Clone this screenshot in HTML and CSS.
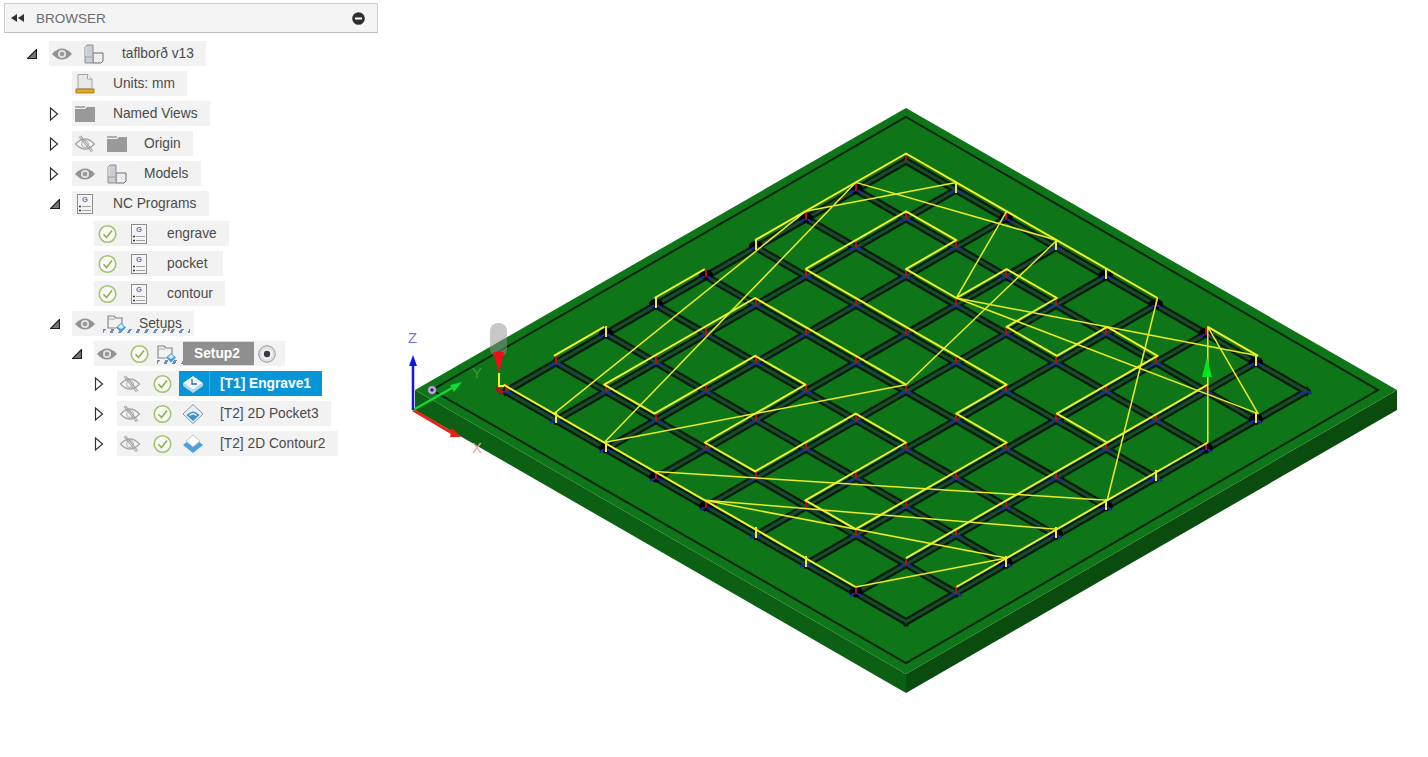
FILE: index.html
```html
<!DOCTYPE html>
<html lang="en">
<head>
<meta charset="utf-8">
<title>Browser</title>
<link rel="stylesheet" href="styles.css">
</head>
<body>
<svg class="sprites" aria-hidden="true">
  <symbol id="eye" viewBox="0 0 22 22"><path d="M1 11Q11 0 21 11Q11 22 1 11Z" fill="#939393"/><circle cx="11" cy="11" r="4" fill="#e6e6e6"/><circle cx="11" cy="11" r="2.3" fill="#999"/></symbol>
  <symbol id="eyeoff" viewBox="0 0 22 22"><path d="M1.5 11Q11 1 20.500 11Q11 21 1.500 11Z" fill="none" stroke="#a8a8a8" stroke-width="1.300"/><circle cx="11" cy="11" r="3.500" fill="none" stroke="#b0b0b0"/><path d="M5 3.500L17.500 19M6.500 2.800L19 18" stroke="#a0a0a0" stroke-width="1.100" fill="none"/></symbol>
  <symbol id="check" viewBox="0 0 22 22"><circle cx="11.500" cy="11" r="8.300" fill="#f9f9f9" stroke="#a2c36a" stroke-width="1.600"/><path d="M7.500 11.300L10.500 14.500L16 7.500" fill="none" stroke="#8fb050" stroke-width="1.600"/></symbol>
  <symbol id="comp" viewBox="0 0 22 22"><path d="M10 10H20V18L18 20H10Z" fill="#eceef0" stroke="#6c6c6c"/><path d="M2 4L4 2H10V20H2Z" fill="#c9ced4" stroke="#8e8e8e"/><path d="M2.500 14H9.500" stroke="#9ea4ab"/><path d="M3 3.500V13" stroke="#e6e9ec"/></symbol>
  <symbol id="units" viewBox="0 0 22 22"><path d="M4 1.500H13.500L18 6V16H4Z" fill="#e8e8e8" stroke="#a4a4a4"/><path d="M13.500 1.500V6H18" fill="#fafafa" stroke="#a4a4a4"/><rect x="2" y="16" width="18" height="4" fill="#e5a81f" stroke="#8f6212" stroke-width=".7"/></symbol>
  <symbol id="folder" viewBox="0 0 22 22"><path d="M1 3H11V5H1Z" fill="#adadad"/><path d="M1 6H11L13 4H21V19H1Z" fill="#999"/></symbol>
  <symbol id="nc" viewBox="0 0 22 22"><rect x="3.500" y="1.500" width="15" height="19" fill="#f5f5f5" stroke="#8c8c8c"/><path d="M5 13.500H7M5 17.500H7" stroke="#333" stroke-width="1.600"/><path d="M8 13.500H17M8 17.500H17" stroke="#a0a0a0"/></symbol>
  <symbol id="setup" viewBox="0 0 22 22"><path d="M10 15H2V3H8L10 5H16V11" fill="none" stroke="#808080" stroke-width="1.100"/><path d="M2 6H9" stroke="#a8a8a8"/><path d="M15 10L20 14.500L15 19.500L10 14.500Z" fill="#3f9fe0"/><path d="M15 11L18 14L15 16L12 14Z" fill="#d9eefb"/></symbol>
  <symbol id="radio" viewBox="0 0 22 22"><circle cx="11" cy="11" r="8.300" fill="#dedede" stroke="#9a9a9a"/><circle cx="11" cy="11" r="5.500" fill="#f4f4f4"/><circle cx="11" cy="11" r="3.200" fill="#3a3a46"/></symbol>
  <symbol id="engrave" viewBox="0 0 22 22"><path d="M1 10V13L11 20L21 13V10L11 17Z" fill="#bdd3e3"/><path d="M11 3L21 10L11 17L1 10Z" fill="#f3f6f8"/><path d="M10 6V11H15" fill="none" stroke="#1f6fb5" stroke-width="1.300"/></symbol>
  <symbol id="pocket" viewBox="0 0 22 22"><path d="M11 1.500L21 11L11 20.500L1 11Z" fill="#eaeff3" stroke="#7f97ad"/><path d="M4.500 12Q11 5 17.500 12L11 18Z" fill="#3f90d0"/><path d="M7.500 12.500Q11 9 14.500 12.500" fill="none" stroke="#e6f2fa" stroke-width="1.200"/></symbol>
  <symbol id="contour" viewBox="0 0 22 22"><path d="M1 12L11 4L21 12L11 20Z" fill="#4da0dd"/><path d="M4 8L11 2L18 8L11 14Z" fill="#fff" stroke="#a9bccb" stroke-width=".8"/></symbol>
  <symbol id="open" viewBox="0 0 10 10"><path d="M.5 9.500H9.500V.5Z" fill="#777" stroke="#1c1c1c" stroke-width="1.200"/></symbol>
  <symbol id="closed" viewBox="0 0 10 14"><path d="M1.500 1L8.500 7L1.500 13Z" fill="#fff" stroke="#333" stroke-width="1.200"/></symbol>
</svg>

<div class="app">
  <aside class="browser">
    <header class="browser-head">
      <svg class="collapse" viewBox="0 0 13 8"><path d="M0 4L6 0V8ZM7 4L13 0V8Z"/></svg>
      <span class="browser-title">BROWSER</span>
      <svg class="pin" viewBox="0 0 13 13"><circle cx="6.500" cy="6.500" r="6.300"/><rect x="3" y="5.500" width="7" height="2"/></svg>
    </header>
    <div class="tree">
      <div class="row lvl0"><span class="tri"><svg class="tri-open"><use href="#open"/></svg></span><div class="chip"><span class="slot"><svg class="ico"><use href="#eye"/></svg></span><span class="slot"><svg class="ico"><use href="#comp"/></svg></span><span class="label">taflborð v13</span></div></div>
      <div class="row lvl1"><span class="tri"></span><div class="chip"><span class="slot"><svg class="ico"><use href="#units"/></svg></span><span class="label">Units: mm</span></div></div>
      <div class="row lvl1"><span class="tri"><svg class="tri-closed"><use href="#closed"/></svg></span><div class="chip"><span class="slot"><svg class="ico"><use href="#folder"/></svg></span><span class="label">Named Views</span></div></div>
      <div class="row lvl1"><span class="tri"><svg class="tri-closed"><use href="#closed"/></svg></span><div class="chip"><span class="slot"><svg class="ico"><use href="#eyeoff"/></svg></span><span class="slot"><svg class="ico"><use href="#folder"/></svg></span><span class="label label-op">Origin</span></div></div>
      <div class="row lvl1"><span class="tri"><svg class="tri-closed"><use href="#closed"/></svg></span><div class="chip"><span class="slot"><svg class="ico"><use href="#eye"/></svg></span><span class="slot"><svg class="ico"><use href="#comp"/></svg></span><span class="label label-op">Models</span></div></div>
      <div class="row lvl1"><span class="tri"><svg class="tri-open"><use href="#open"/></svg></span><div class="chip"><span class="slot slot-nc"><svg class="ico"><use href="#nc"/></svg><span class="g-mark">G</span></span><span class="label">NC Programs</span></div></div>
      <div class="row lvl2"><span class="tri"></span><div class="chip"><span class="slot"><svg class="ico"><use href="#check"/></svg></span><span class="slot slot-nc"><svg class="ico"><use href="#nc"/></svg><span class="g-mark">G</span></span><span class="label">engrave</span></div></div>
      <div class="row lvl2"><span class="tri"></span><div class="chip"><span class="slot"><svg class="ico"><use href="#check"/></svg></span><span class="slot slot-nc"><svg class="ico"><use href="#nc"/></svg><span class="g-mark">G</span></span><span class="label label-wide">pocket</span></div></div>
      <div class="row lvl2"><span class="tri"></span><div class="chip"><span class="slot"><svg class="ico"><use href="#check"/></svg></span><span class="slot slot-nc"><svg class="ico"><use href="#nc"/></svg><span class="g-mark">G</span></span><span class="label">contour</span></div></div>
      <div class="row lvl1"><span class="tri"><svg class="tri-open"><use href="#open"/></svg></span><div class="chip"><span class="slot"><svg class="ico"><use href="#eye"/></svg></span><span class="slot"><svg class="ico"><use href="#setup"/></svg></span><span class="label label-tight">Setups</span><span class="hatch hatch-setups"></span></div></div>
      <div class="row lvl2"><span class="tri"><svg class="tri-open"><use href="#open"/></svg></span><div class="chip chip-setup"><span class="slot"><svg class="ico"><use href="#eye"/></svg></span><span class="slot"><svg class="ico"><use href="#check"/></svg></span><span class="slot slot-setup"><svg class="ico"><use href="#setup"/></svg></span><span class="active-setup">Setup2</span><span class="slot slot-radio"><svg class="ico"><use href="#radio"/></svg></span><span class="hatch hatch-setup2"></span></div></div>
      <div class="row lvl3"><span class="tri"><svg class="tri-closed"><use href="#closed"/></svg></span><div class="chip"><span class="slot"><svg class="ico"><use href="#eyeoff"/></svg></span><span class="slot"><svg class="ico"><use href="#check"/></svg></span><div class="selected"><span class="selected-icon"><svg class="ico"><use href="#engrave"/></svg></span><span class="selected-label">[T1] Engrave1</span></div></div></div>
      <div class="row lvl3"><span class="tri"><svg class="tri-closed"><use href="#closed"/></svg></span><div class="chip"><span class="slot"><svg class="ico"><use href="#eyeoff"/></svg></span><span class="slot"><svg class="ico"><use href="#check"/></svg></span><span class="slot slot-op"><svg class="ico"><use href="#pocket"/></svg></span><span class="label label-op">[T2] 2D Pocket3</span></div></div>
      <div class="row lvl3"><span class="tri"><svg class="tri-closed"><use href="#closed"/></svg></span><div class="chip"><span class="slot"><svg class="ico"><use href="#eyeoff"/></svg></span><span class="slot"><svg class="ico"><use href="#check"/></svg></span><span class="slot slot-op"><svg class="ico"><use href="#contour"/></svg></span><span class="label label-op">[T2] 2D Contour2</span></div></div>
    </div>
  </aside>

  <svg class="viewport" viewBox="378 0 1050 757" role="img" aria-label="Engraving toolpath on a game board">
    <defs>
      <g id="red"><path d="M0-7V1" stroke="#b01212" stroke-width="2"/></g>
      <g id="b"><path d="M-6 3L-1.500 .5M1.500 .5L6 3" stroke="#1a2ca8" stroke-width="2.200" fill="none"/></g>
      <g id="n"><use href="#b"/><use href="#red"/></g>
      <g id="tb"><use href="#b"/><path d="M0-8V3" stroke="#eeee20" stroke-width="2"/></g>
      <ellipse id="blob" cx="0" cy="-1" rx="7" ry="5" fill="#020402"/>
      <g id="nk"><use href="#blob"/><use href="#n"/></g>
      <g id="tk"><use href="#blob"/><use href="#tb"/></g>
    </defs>

    <polygon class="side-left" points="415,390 906,674 906,693 415,410"/>
    <polygon class="side-right" points="1397,390 906,674 906,693 1397,410"/>
    <polygon class="top-face" points="906,108 1397,390 906,674 415,390"/>
    <polygon class="outer-groove" points="906,117 1378,390 906,663 432,390"/>

    <g transform="matrix(50 28.8 -50 28.8 906 161)">
      <path class="trench" d="M0 0H8M0 1H8M0 2H8M0 3H8M0 4H8M0 5H8M0 6H8M0 7H8M0 8H8M0 0V8M1 0V8M2 0V8M3 0V8M4 0V8M5 0V8M6 0V8M7 0V8M8 0V8"/>
      <path class="trench-core" d="M0 0H8M0 1H8M0 2H8M0 3H8M0 4H8M0 5H8M0 6H8M0 7H8M0 8H8M0 0V8M1 0V8M2 0V8M3 0V8M4 0V8M5 0V8M6 0V8M7 0V8M8 0V8"/>
    </g>

    <g>
      <use href="#red" x="906" y="161"/>
      <use href="#nk" x="856" y="190"/><use href="#tb" x="956" y="190"/>
      <use href="#nk" x="806" y="219"/><use href="#n" x="906" y="219"/><use href="#nk" x="1006" y="219"/>
      <use href="#tk" x="756" y="247"/><use href="#n" x="856" y="247"/><use href="#n" x="956" y="247"/><use href="#tb" x="1056" y="247"/>
      <use href="#nk" x="706" y="276"/><use href="#n" x="806" y="276"/><use href="#n" x="906" y="276"/><use href="#n" x="1006" y="276"/><use href="#tk" x="1106" y="276"/>
      <use href="#tk" x="656" y="305"/><use href="#n" x="756" y="305"/><use href="#n" x="856" y="305"/><use href="#n" x="956" y="305"/><use href="#n" x="1056" y="305"/><use href="#nk" x="1156" y="305"/>
      <use href="#tk" x="606" y="334"/><use href="#n" x="706" y="334"/><use href="#n" x="806" y="334"/><use href="#n" x="906" y="334"/><use href="#n" x="1006" y="334"/><use href="#n" x="1106" y="334"/><use href="#nk" x="1206" y="334"/>
      <use href="#n" x="556" y="363"/><use href="#n" x="656" y="363"/><use href="#n" x="756" y="363"/><use href="#n" x="856" y="363"/><use href="#n" x="956" y="363"/><use href="#n" x="1056" y="363"/><use href="#n" x="1156" y="363"/><use href="#tk" x="1256" y="363"/>
      <use href="#n" x="506" y="391"/><use href="#n" x="606" y="391"/><use href="#n" x="706" y="391"/><use href="#n" x="806" y="391"/><use href="#n" x="906" y="391"/><use href="#n" x="1006" y="391"/><use href="#n" x="1106" y="391"/><use href="#n" x="1206" y="391"/><use href="#b" x="1306" y="391"/>
      <use href="#tb" x="556" y="420"/><use href="#n" x="656" y="420"/><use href="#n" x="756" y="420"/><use href="#n" x="856" y="420"/><use href="#n" x="956" y="420"/><use href="#n" x="1056" y="420"/><use href="#n" x="1156" y="420"/><use href="#tk" x="1256" y="420"/>
      <use href="#tk" x="606" y="449"/><use href="#n" x="706" y="449"/><use href="#n" x="806" y="449"/><use href="#n" x="906" y="449"/><use href="#n" x="1006" y="449"/><use href="#n" x="1106" y="449"/><use href="#nk" x="1206" y="449"/>
      <use href="#nk" x="656" y="478"/><use href="#n" x="756" y="478"/><use href="#n" x="856" y="478"/><use href="#n" x="956" y="478"/><use href="#n" x="1056" y="478"/><use href="#tb" x="1156" y="478"/>
      <use href="#nk" x="706" y="507"/><use href="#n" x="806" y="507"/><use href="#n" x="906" y="507"/><use href="#n" x="1006" y="507"/><use href="#tk" x="1106" y="507"/>
      <use href="#tb" x="756" y="535"/><use href="#n" x="856" y="535"/><use href="#n" x="956" y="535"/><use href="#tk" x="1056" y="535"/>
      <use href="#tb" x="806" y="564"/><use href="#n" x="906" y="564"/><use href="#tk" x="1006" y="564"/>
      <use href="#nk" x="856" y="593"/><use href="#n" x="956" y="593"/>
    </g>

    <g transform="matrix(50.3 28.9 -50.3 28.9 906 153.500)">
      <path class="rapid" d="M0 1L3 0M0 2L1 0M1 8L0 2M2 8L0 1M2 8L4 4L3 0M3 2L2 0M3 2L7 0M3 2L8 1L6 0L8 2M5 0L8 4L3 8M4 8L8 5M4 8L8 6L7 8"/>
      <path class="feed" d="M0 3L0 0L5 0M6 0L7 0M0 4L0 5M0 6L0 7M0 8L7 8M8 7L8 2M1 3L1 1L2 1L2 2L3 2L3 1L4 1L4 2L5 2L5 1L6 1L6 3L7 3M7 1L7 7M1 3L5 3L5 4L6 4L6 7L5 7L5 5L4 5L4 7L3 7L3 5L2 5L2 7L1 7L1 4L4 4"/>
    </g>

    <path class="lead" d="M499 373V386H504"/>
    <path class="lead-mark" d="M496 388L503 393"/>
    <path class="arrow-green" d="M1207 357L1212 377H1202Z"/>

    <rect class="tool-shank" x="490" y="323" width="17" height="34" rx="8"/>
    <path class="tool-tip" d="M493 352H504L499 373Z"/>

    <path class="axis-x" d="M413 410L452 433"/>
    <path class="head-x" d="M461 437L450 437L452 428Z"/>
    <path class="axis-y" d="M413 410L452 388"/>
    <path class="head-y" d="M462 382L450 385L454 392Z"/>
    <path class="axis-z" d="M413 410V364"/>
    <path class="head-z" d="M413 355L417 366H409Z"/>
    <circle class="origin-ring" cx="432" cy="390" r="4.500"/>
    <circle class="origin-dot" cx="432" cy="390" r="1.800"/>
    <text class="label-z" x="408" y="343">Z</text>
    <text class="label-y" x="472" y="378">Y</text>
    <text class="label-x" x="472" y="453">X</text>
  </svg>
</div>
</body>
</html>
```
FILE: styles.css
```css
html, body {
  margin: 0;
  padding: 0;
  height: 100%;
  background: #fff;
  overflow: hidden;
  font-family: "Liberation Sans", Arial, sans-serif;
}

.sprites {
  position: absolute;
  width: 0;
  height: 0;
}

.app {
  display: flex;
  height: 757px;
}

.browser {
  width: 374px;
  margin: 3px 0 0 4px;
  flex: none;
}

.browser-head {
  display: flex;
  align-items: center;
  height: 28px;
  padding: 0 12px 0 6px;
  background: #f4f4f4;
  border: 1px solid #cfcfcf;
  border-bottom-color: #bdbdbd;
}

.collapse {
  width: 13px;
  height: 8px;
  fill: #333;
}

.browser-title {
  margin-left: 12px;
  font-size: 13.5px;
  color: #6a6a6a;
  flex: 1;
}

.pin {
  width: 13px;
  height: 13px;
  fill: #2e2e2e;
}

.pin rect {
  fill: #fff;
}

.tree {
  display: flex;
  flex-direction: column;
  gap: 5px;
  margin-top: 8px;
}

.row {
  display: flex;
  align-items: center;
  height: 25px;
}

.lvl0 { padding-left: 23px; }
.lvl1 { padding-left: 46px; }
.lvl2 { padding-left: 68px; }
.lvl3 { padding-left: 91px; }

.tri {
  display: flex;
  align-items: center;
  flex: none;
  width: 22px;
}

.tri-open {
  width: 10px;
  height: 10px;
}

.tri-closed {
  width: 10px;
  height: 14px;
  margin-left: -1px;
}

.chip {
  position: relative;
  display: flex;
  align-items: center;
  gap: 6px;
  height: 25px;
  background: #f2f2f2;
}

.chip-setup {
  padding-right: 5px;
}

.slot {
  display: flex;
  align-items: center;
  justify-content: center;
  flex: none;
  width: 26px;
  height: 25px;
}

.slot-nc {
  position: relative;
}

.g-mark {
  position: absolute;
  left: 0;
  right: 0;
  top: 5px;
  font-size: 7.5px;
  font-weight: bold;
  line-height: 8px;
  text-align: center;
  color: #2b86d2;
}

.ico {
  display: block;
  width: 22px;
  height: 22px;
}

.label {
  margin-left: 9px;
  padding-right: 12.5px;
  font-size: 13.75px;
  line-height: 25px;
  color: #4a4a4a;
  white-space: nowrap;
}

.label-tight {
  margin-left: 3px;
}

.label-op {
  margin-left: 8px;
}

.label-wide {
  padding-right: 15px;
}

.slot-op {
  margin-left: -1px;
}

.slot-setup {
  margin-left: -4px;
}

.slot-radio {
  margin-left: -6px;
}

.active-setup {
  box-sizing: border-box;
  width: 71px;
  height: 25px;
  margin-left: -3px;
  padding-left: 11px;
  font-size: 13.75px;
  font-weight: bold;
  line-height: 23px;
  color: #fff;
  background: #8f8f8f;
  border-top: 1px solid #dcdcdc;
  border-bottom: 1px solid #dcdcdc;
}

.selected {
  display: flex;
  align-items: center;
  height: 25px;
  margin-left: -2px;
  background: #0696d7;
}

.selected-icon {
  display: flex;
  align-items: center;
  box-sizing: border-box;
  width: 31px;
  height: 25px;
  padding-left: 3px;
  border-right: 1px solid #38abe2;
}

.selected-label {
  padding: 0 11px 0 10px;
  font-size: 13.75px;
  font-weight: bold;
  color: #fff;
  white-space: nowrap;
}

.hatch {
  position: absolute;
  height: 4px;
  background: repeating-linear-gradient(120deg, #6d8db3 0 2.5px, transparent 2.5px 7.5px);
}

.hatch-setups {
  left: 31px;
  top: 18px;
  width: 87px;
}

.hatch-setup2 {
  left: 63px;
  top: 19px;
  width: 26px;
}

.viewport {
  display: block;
  flex: none;
  width: 1050px;
  height: 757px;
  filter: blur(0.4px);
}

.top-face { fill: #0f7519; }
.side-left { fill: #0c6013; }
.side-right { fill: #094c0e; }

.outer-groove {
  fill: none;
  stroke: #03240a;
  stroke-width: 2;
}

.trench,
.trench-core,
.feed,
.rapid {
  fill: none;
  vector-effect: non-scaling-stroke;
}

.trench {
  stroke: #041c0a;
  stroke-width: 7.5;
  stroke-linecap: square;
}

.trench-core {
  stroke: #174d2d;
  stroke-width: 3;
  stroke-linecap: square;
}

.feed {
  stroke: #f3f32a;
  stroke-width: 2;
  stroke-linejoin: round;
}

.rapid {
  stroke: #ecec22;
  stroke-width: 1.5;
  stroke-linejoin: round;
}

.lead {
  fill: none;
  stroke: #f3f32a;
  stroke-width: 2;
}

.lead-mark {
  stroke: #b01212;
  stroke-width: 4;
}

.arrow-green { fill: #05e51e; }

.tool-shank {
  fill: #8f8f8f;
  opacity: 0.5;
}

.tool-tip { fill: #f00d14; }

.axis-x { stroke: #f0201a; stroke-width: 3; }
.head-x { fill: #ef1c16; }
.axis-y { stroke: #12d83a; stroke-width: 2.5; }
.head-y { fill: #12d83a; }
.axis-z { stroke: #0a18e6; stroke-width: 2.5; }
.head-z { fill: #0a18e6; }

.origin-ring { fill: #b6b2c8; stroke: #4a4a60; stroke-width: 1; }
.origin-dot { fill: #2b2470; }

.label-z,
.label-y,
.label-x {
  font-size: 15px;
  font-family: "Liberation Sans", Arial, sans-serif;
}

.label-z { fill: #7076e2; }
.label-y { fill: #3f9746; }
.label-x { fill: #e9a6a0; }
```
